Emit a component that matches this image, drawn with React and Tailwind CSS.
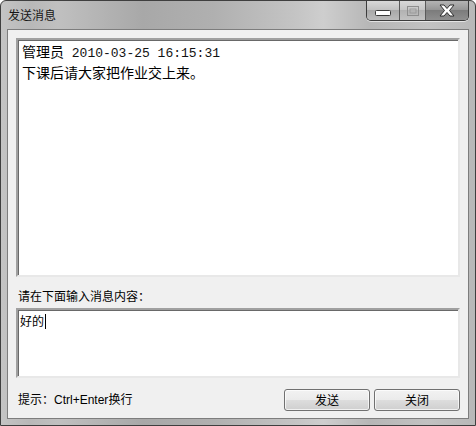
import React from "react";

const cjk = { fontFamily: '"Noto Sans CJK SC", "Liberation Sans", sans-serif' };
const ui = { fontFamily: '"Liberation Sans", "Noto Sans CJK SC", sans-serif' };

function TitleButtons() {
  return (
    <div className="flex h-[20px] mr-[6px] self-start rounded-b-[5px] border border-t-0 border-[#3c3c3c] overflow-hidden shadow-[0_1px_0_rgba(255,255,255,0.6)]">
      <div className="w-[33px] h-full flex items-end justify-center pb-[4px] bg-[linear-gradient(to_bottom,#d8d8d8,#c2c2c2_45%,#a9a9a9_50%,#bcbcbc)] border-r border-[#5a5a5a]">
        <svg width="16" height="6" viewBox="0 0 16 6">
          <rect x="0.5" y="0.5" width="15" height="5" rx="1" fill="#ffffff" stroke="#3a3a3a" />
        </svg>
      </div>
      <div className="w-[26px] h-full flex items-center justify-center bg-[linear-gradient(to_bottom,#d8d8d8,#c6c6c6_45%,#b2b2b2_50%,#c2c2c2)] border-r border-[#5a5a5a]">
        <svg width="12" height="10" viewBox="0 0 12 10">
          <rect x="0.5" y="0.5" width="11" height="9" fill="none" stroke="#8e8e8e" />
          <rect x="3" y="3" width="6" height="4" fill="none" stroke="#9a9a9a" strokeWidth="1" />
        </svg>
      </div>
      <div className="w-[42px] h-full flex items-center justify-center bg-[linear-gradient(to_bottom,#b4b4b4,#979797_45%,#7c7c7c_50%,#8e8e8e)]">
        <svg width="18" height="13" viewBox="0 0 18 13">
          <path d="M2 1 L6 1 L9 4.5 L12 1 L16 1 L11.5 6.5 L16 12 L12 12 L9 8.5 L6 12 L2 12 L6.5 6.5 Z" fill="#ffffff" stroke="#2e2e2e" strokeWidth="1" strokeLinejoin="round" />
        </svg>
      </div>
    </div>
  );
}

function Btn({ children }) {
  return (
    <div
      className="w-[86px] h-[22px] rounded-[3px] border border-[#707070] flex items-center justify-center text-[12px] text-black bg-[linear-gradient(to_bottom,#f2f2f2,#ebebeb_48%,#dddddd_52%,#cfcfcf)] shadow-[inset_0_0_0_1px_rgba(255,255,255,0.7)]"
      style={cjk}
    >
      {children}
    </div>
  );
}

export default function App() {
  return (
    <div className="w-[476px] h-[426px] bg-white">
      <div className="w-[476px] h-[426px] flex flex-col rounded-t-[6px] border border-[#3f3f3f] bg-[linear-gradient(to_right,#c4c4c4,#b8b8b8_6%,#c0c0c0_12%,#a8a8a8_30%,#b0b0b0_45%,#c4c4c4_62%,#cecece_68%,#b6b6b6_78%,#c2c2c2_90%,#b8b8b8)]">
        <div className="h-[28px] flex items-start justify-between shrink-0">
          <div className="pl-[7px] pt-[6px] text-[12px] text-[#161616] leading-[16px]" style={cjk}>
            发送消息
          </div>
          <TitleButtons />
        </div>
        <div className="mx-[6px] h-[390px] border border-[#7d7d7d] bg-[#f0f0f0] flex flex-col pl-[8px] pr-[8px] pt-[8px] shrink-0">
          <div className="h-[239px] border-2 border-t-[#a0a0a0] border-l-[#a0a0a0] border-b-[#e8e8e8] border-r-[#e8e8e8] bg-white">
            <div className="h-full w-full border-t border-l border-[#696969] pl-[3px] pt-[1px]">
              <div className="text-[14px] leading-[18px] text-black" style={cjk}>
                管理员<span className="text-[13px] text-[#111]" style={{ fontFamily: '"Liberation Mono", monospace' }}> 2010-03-25 16:15:31</span>
              </div>
              <div className="text-[14px] leading-[18px] text-black" style={cjk}>
                下课后请大家把作业交上来。
              </div>
            </div>
          </div>
          <div className="h-[31px] flex items-center pl-[2px] pt-[7px] text-[12px] text-black" style={cjk}>
            请在下面输入消息内容：
          </div>
          <div className="h-[70px] border-2 border-t-[#a0a0a0] border-l-[#a0a0a0] border-b-[#e8e8e8] border-r-[#e8e8e8] bg-white">
            <div className="h-full w-full border-t border-l border-[#696969] pl-[1px] pt-[2px]">
              <div className="flex items-center text-[12px] leading-[16px] text-black" style={cjk}>
                好的<span className="inline-block w-[1px] h-[15px] bg-black ml-[1px]" />
              </div>
            </div>
          </div>
          <div className="flex-1 flex items-center justify-between pl-[2px] pt-[3px]">
            <div className="text-[12px] text-black" style={ui}>
              <span style={cjk}>提示：</span>Ctrl+Enter<span style={cjk}>换行</span>
            </div>
            <div className="flex gap-[4px]">
              <Btn>发送</Btn>
              <Btn>关闭</Btn>
            </div>
          </div>
        </div>
      </div>
    </div>
  );
}
